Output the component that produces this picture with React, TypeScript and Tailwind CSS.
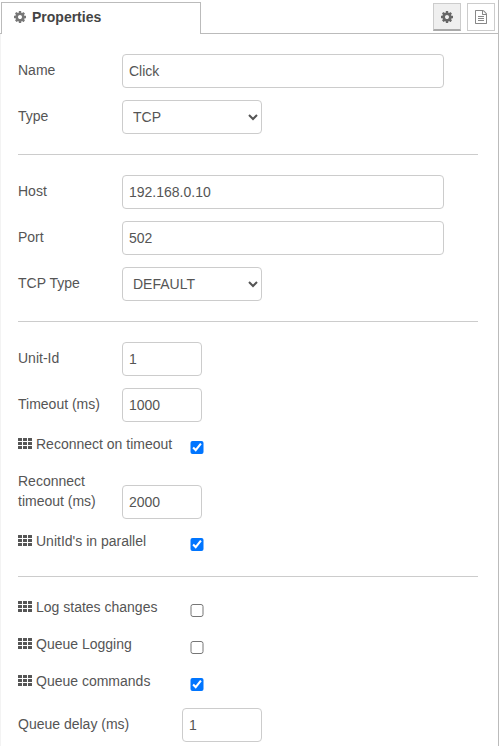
import type { ReactNode } from "react";

const COG =
  "M1152 896q0-106-75-181t-181-75-181 75-75 181 75 181 181 75 181-75 75-181zm512-109v222q0 12-8 23t-20 13l-185 28q-19 54-39 91 35 50 107 138 10 12 10 25t-9 23q-27 37-99 108t-94 71q-12 0-26-9l-138-108q-44 23-91 38-16 136-29 186-7 28-36 28h-222q-14 0-24.5-8.5t-11.5-21.5l-28-184q-49-16-90-37l-141 107q-10 9-25 9-14 0-25-11-126-114-165-168-7-10-7-23 0-12 8-23 15-21 51-66.5t54-70.5q-27-50-41-99l-183-27q-13-2-21-12.5t-8-23.5v-222q0-12 8-23t19-13l186-28q14-46 39-92-40-57-107-138-10-12-10-24 0-10 9-23 26-36 98.5-107.5t94.5-71.5q13 0 26 10l138 107q44-23 91-38 16-136 29-186 7-28 36-28h222q14 0 24.5 8.5t11.5 21.5l28 184q49 16 90 37l142-107q9-9 24-9 13 0 25 10 129 119 165 170 7 8 7 22 0 12-8 23-15 21-51 66.5t-54 70.5q26 50 41 98l183 28q13 2 21 12.5t8 23.5z";
const FILE_TEXT =
  "M1596 380q28 28 48 76t20 88v1152q0 40-28 68t-68 28h-1344q-40 0-68-28t-28-68v-1600q0-40 28-68t68-28h896q40 0 88 20t76 48zm-444-244v376h376q-10-29-22-41l-313-313q-12-12-41-22zm384 1528v-1024h-416q-40 0-68-28t-28-68v-416h-768v1536h1280zm-1024-864q0-14 9-23t23-9h704q14 0 23 9t9 23v64q0 14-9 23t-23 9h-704q-14 0-23-9t-9-23v-64zm736 224q14 0 23 9t9 23v64q0 14-9 23t-23 9h-704q-14 0-23-9t-9-23v-64q0-14 9-23t23-9h704zm0 256q14 0 23 9t9 23v64q0 14-9 23t-23 9h-704q-14 0-23-9t-9-23v-64q0-14 9-23t23-9h704z";

function Glyph({ d, className }: { d: string; className?: string }) {
  return (
    <svg viewBox="0 0 1792 1792" className={`h-3.5 w-3.5 shrink-0 fill-current ${className ?? ""}`}>
      <path d={d} />
    </svg>
  );
}

function GridIcon() {
  return (
    <svg viewBox="0 0 14 11" className="mt-1 mr-1 h-[11px] w-3.5 shrink-0 fill-current">
      {[0, 4, 8].map((y) =>
        [0, 5, 10].map((x) => <rect key={`${x}-${y}`} x={x} y={y} width="4" height="3" rx="0.3" />)
      )}
    </svg>
  );
}

const field =
  "h-[34px] rounded border border-[#ccc] bg-white text-sm leading-5 text-[#555] outline-none";

function Row({ label, wide, children }: { label: string; wide?: boolean; children: ReactNode }) {
  return (
    <div className="flex items-start">
      <label className={`${wide ? "w-[164px]" : "w-[104px]"} shrink-0 pt-1.5`}>{label}</label>
      {children}
    </div>
  );
}

function TextRow({ label, value }: { label: string; value: string }) {
  return (
    <Row label={label}>
      <input className={`${field} w-[322px] px-1.5`} defaultValue={value} />
    </Row>
  );
}

function NumberRow({ label, value, wide }: { label: string; value: string; wide?: boolean }) {
  return (
    <Row label={label} wide={wide}>
      <input className={`${field} w-20 px-1.5`} defaultValue={value} />
    </Row>
  );
}

function SelectRow({ label, value }: { label: string; value: string }) {
  return (
    <Row label={label}>
      <select className={`${field} w-[140px] px-1.5`} defaultValue={value}>
        <option>{value}</option>
      </select>
    </Row>
  );
}

function CheckRow({ label, checked }: { label: string; checked?: boolean }) {
  return (
    <div className="flex h-[25px] items-start">
      <label className="flex w-[172px] shrink-0 items-start whitespace-nowrap">
        <GridIcon />
        {label}
      </label>
      <input type="checkbox" defaultChecked={checked} className="mt-[7px] h-[13px] w-3.5" />
    </div>
  );
}

function Divider() {
  return <hr className="my-2 border-t border-[#ccc]" />;
}

export default function App() {
  return (
    <div className="flex h-[746px] w-[499px] flex-col overflow-hidden border-r border-[#bbb] bg-white font-['Liberation_Sans',Arial,sans-serif] text-sm leading-5 text-[#555]">
      <header className="flex h-[34px] shrink-0 items-stretch pt-0.5">
        <div className="w-px border-b border-[#bbb]" />
        <div className="flex w-[200px] items-start border-x border-t border-[#bbb] pt-1 pl-[11px]">
          <Glyph d={COG} className="mt-[3px] text-[#777]" />
          <span className="ml-[5px] font-bold text-[#444]">Properties</span>
        </div>
        <div className="flex flex-1 items-start justify-end gap-1.5 border-b border-[#bbb] pt-px pr-[3px]">
          <button className="flex h-7 w-7 items-start justify-center border border-b-2 border-[#ccc] border-b-[#aaa] bg-[#efefef] pt-[6px] text-[#666]">
            <Glyph d={COG} />
          </button>
          <button className="flex h-7 w-7 items-start justify-center border border-[#ccc] bg-white pt-[6px] text-[#888]">
            <Glyph d={FILE_TEXT} />
          </button>
        </div>
      </header>
      <main className="flex flex-1 flex-col gap-3 border-l border-[#f3f3f3] pt-5 pr-5 pl-[17px]">
        <TextRow label="Name" value="Click" />
        <SelectRow label="Type" value="TCP" />
        <Divider />
        <TextRow label="Host" value="192.168.0.10" />
        <TextRow label="Port" value="502" />
        <SelectRow label="TCP Type" value="DEFAULT" />
        <Divider />
        <NumberRow label="Unit-Id" value="1" />
        <NumberRow label="Timeout (ms)" value="1000" />
        <CheckRow label="Reconnect on timeout" checked />
        <div className="flex items-end">
          <label className="mb-2 w-[104px] shrink-0 pr-4">Reconnect timeout (ms)</label>
          <input className={`${field} w-20 px-1.5`} defaultValue="2000" />
        </div>
        <CheckRow label="UnitId's in parallel" checked />
        <Divider />
        <CheckRow label="Log states changes" />
        <CheckRow label="Queue Logging" />
        <CheckRow label="Queue commands" checked />
        <NumberRow label="Queue delay (ms)" value="1" wide />
      </main>
    </div>
  );
}
